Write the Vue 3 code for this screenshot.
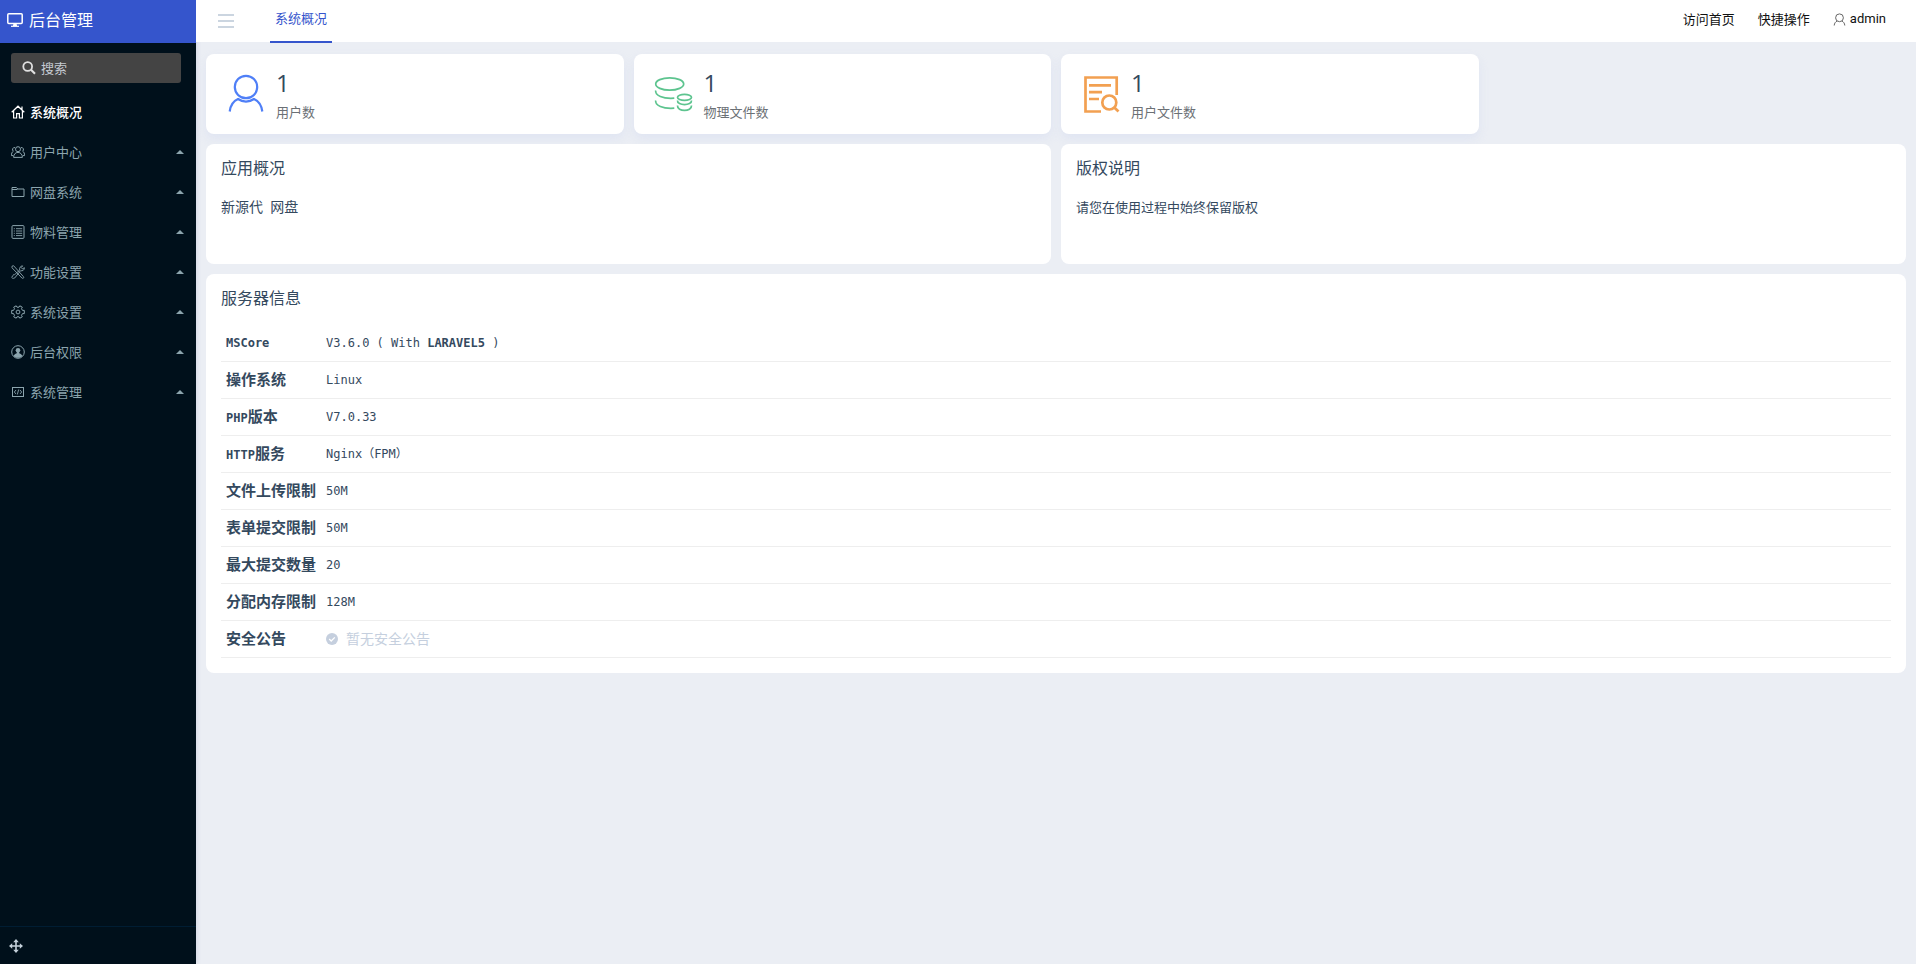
<script setup>
const menu = [
  { name: '系统概况', icon: 'home', active: true },
  { name: '用户中心', icon: 'users' },
  { name: '网盘系统', icon: 'folder' },
  { name: '物料管理', icon: 'list' },
  { name: '功能设置', icon: 'tools' },
  { name: '系统设置', icon: 'gear' },
  { name: '后台权限', icon: 'person' },
  { name: '系统管理', icon: 'code' },
]

const stats = [
  { label: '用户数', value: 1, icon: 'user' },
  { label: '物理文件数', value: 1, icon: 'coins' },
  { label: '用户文件数', value: 1, icon: 'search-doc' },
]

const server = [
  { latin: 'MSCore', cjk: '' },
  { latin: '', cjk: '操作系统', value: 'Linux' },
  { latin: 'PHP', cjk: '版本', value: 'V7.0.33' },
  { latin: 'HTTP', cjk: '服务', value: 'Nginx（FPM）' },
  { latin: '', cjk: '文件上传限制', value: '50M' },
  { latin: '', cjk: '表单提交限制', value: '50M' },
  { latin: '', cjk: '最大提交数量', value: '20' },
  { latin: '', cjk: '分配内存限制', value: '128M' },
  { latin: '', cjk: '安全公告', notice: '暂无安全公告' },
]
</script>

<template>
  <div class="shell">
    <aside class="sidebar">
      <a class="brand" href="#">
        <svg width="16" height="16" viewBox="0 0 16 16" fill="none" stroke="currentColor">
          <rect x="0.8" y="1.8" width="14.4" height="9.6" rx="1" stroke-width="1.5" />
          <path d="M6.5 11.5h3l.6 2.6H5.9z" fill="currentColor" stroke="none" />
          <path d="M4 14.3h8" stroke-width="1.2" />
        </svg>
        <span>后台管理</span>
      </a>
      <label class="search">
        <svg width="14" height="14" viewBox="0 0 14 14" fill="none" stroke="currentColor">
          <circle cx="5.7" cy="5.5" r="4.4" stroke-width="1.8" />
          <path d="M9 8.8l4 4" stroke-width="2.2" />
        </svg>
        <input type="text" placeholder="搜索" aria-label="搜索" />
      </label>
      <nav class="menu">
        <a v-for="m in menu" :key="m.name" href="#" class="item" :class="{ active: m.active }">
          <svg width="14" height="14" viewBox="0 0 14 14" fill="none" stroke="currentColor">
            <template v-if="m.icon === 'home'">
              <path d="M.7 7.3L7 1.2l6.3 6.1M2.6 6v7h3V8.6h2.8V13h3V6M11 1.500v3.200" stroke-width="1.200" />
            </template>
            <template v-else-if="m.icon === 'users'">
              <circle cx="7" cy="4.2" r="2.5" />
              <path d="M2.6 12.4c0-3 1.8-5 4.4-5s4.4 2 4.4 5zM4 2.6a2 2 0 0 0-1.6 3.6C1 6.8.4 8.6.4 10.6h1.8M10 2.6a2 2 0 0 1 1.6 3.6c1.4.6 2 2.4 2 4.4h-1.8" />
            </template>
            <template v-else-if="m.icon === 'folder'">
              <path d="M1 2.5h4.4L6.8 4H13v7.500H1zM1 4.500h5.500" />
            </template>
            <template v-else-if="m.icon === 'list'">
              <rect x="1" y=".6" width="12" height="12.8" rx="1" />
              <path d="M5 3.7h6.2M5 6h6.2M5 8.3h6.2M5 10.6h6.2M2.8 3.7h1M2.8 6h1M2.8 8.3h1M2.8 10.6h1" stroke-width=".9" />
            </template>
            <template v-else-if="m.icon === 'tools'">
              <path d="M1 1.2l1.6-.5 9.8 10.9c1 1.2-.4 2.4-1.5 1.4L1 2.8zM8.7 5.1c-.6-2 .8-4.4 3-4.2L10.2 2.5l1.2 1.4 2-1.2c.2 2.2-2 3.6-3.8 3L4.5 12c-.5 1.6-3.2 1.8-3.8.4l1.2-1.8c-.2-.7 1.2-1.4 1.8-1z" stroke-width=".9" />
            </template>
            <template v-else-if="m.icon === 'gear'">
              <circle cx="7" cy="7" r="1.9" />
              <path d="M5.200.8L6 2.200h2L8.800.8l2.500 1.400-.8 1.500 1 1.700h1.800v3.200h-1.800l-1 1.700.8 1.500-2.500 1.400L8 11.800H6l-.8 1.400-2.500-1.400.8-1.500-1-1.700H.7V5.400h1.800l1-1.700-.8-1.500z" stroke-linejoin="round" />
            </template>
            <template v-else-if="m.icon === 'person'">
              <circle cx="7" cy="7" r="6.3" />
              <circle cx="7" cy="5.200" r="2.300" fill="currentColor" stroke="none" />
              <path d="M2.600 10.800C3.500 8.800 5 8.600 5.800 8.200V7h2.400v1.200c.8.4 2.300.6 3.200 2.600C10 13.500 4 13.500 2.600 10.800z" fill="currentColor" stroke="none" />
            </template>
            <template v-else>
              <rect x="1.500" y="2.500" width="11" height="9" />
              <path d="M5 5L3.300 7 5 9M9 5l1.700 2L9 9M7.700 4.500l-1.400 5" stroke-width=".9" />
            </template>
          </svg>
          <span>{{ m.name }}</span>
          <i v-if="!m.active" class="caret"></i>
        </a>
      </nav>
      <div class="side-foot">
        <button type="button" aria-label="移动">
          <svg width="14" height="14" viewBox="0 0 14 14" fill="currentColor">
            <path d="M7 0l2.800 3.200H7.800v3h3V4.200L14 7l-3.200 2.800V7.800h-3v3h2L7 14l-2.800-3.200h2v-3h-3v2L0 7l3.200-2.800v2h3v-3h-2z" />
          </svg>
        </button>
      </div>
    </aside>

    <div class="content">
      <header class="topbar">
        <button type="button" class="burger" aria-label="菜单"><i></i><i></i><i></i></button>
        <a href="#" class="tab">系统概况</a>
        <nav class="links">
          <a href="#">访问首页</a>
          <a href="#">快捷操作</a>
          <a href="#" class="account">
            <svg width="13" height="13" viewBox="0 0 13 13" fill="none" stroke="currentColor">
              <circle cx="6.500" cy="4.800" r="3.900" />
              <path d="M1.200 12.500c.2-2.300 1.300-3.700 3-4.500M11.800 12.500c-.2-2.300-1.300-3.700-3-4.500" />
            </svg>
            <span>admin</span>
          </a>
        </nav>
      </header>

      <main class="main">
        <section class="stats">
          <article v-for="s in stats" :key="s.label" class="stat">
            <svg v-if="s.icon === 'user'" width="40" height="40" viewBox="0 0 40 40" fill="none" stroke="#4f7ff7" stroke-width="2.200">
              <circle cx="20" cy="13" r="11.200" />
              <path d="M3.700 37.500C4.500 31 7.500 27 12 25c5 3.300 11 3.300 16 0 4.500 2 7.500 6 8.300 12.500" />
            </svg>
            <svg v-else-if="s.icon === 'coins'" width="40" height="40" viewBox="0 0 40 40" fill="none" stroke="#5dc48f" stroke-width="1.700">
              <ellipse cx="15.700" cy="10" rx="14" ry="6.200" />
              <path d="M1.700 16.500c-.8 5 7 8.500 18.600 7.700M1.700 26.500c-.8 5 7 8.500 18.600 7.700" />
              <ellipse cx="30.500" cy="23.300" rx="7" ry="3" />
              <path d="M23.500 26.500c-.5 5.500 14.500 5.500 14 0M23.500 31.500c-.5 6.500 14.500 6.500 14 0" />
            </svg>
            <svg v-else width="40" height="40" viewBox="0 0 40 40" fill="none" stroke="#f2a051" stroke-width="2.700">
              <path d="M20 37.500H4.500V3.500h31.200V21M8 11.300h22M8 18.200h13M8 25h10" />
              <circle cx="28.300" cy="28.500" r="7" />
              <path d="M33.300 33.500l4.200 4" />
            </svg>
            <div class="figures">
              <strong>{{ s.value }}</strong>
              <span>{{ s.label }}</span>
            </div>
          </article>
        </section>

        <div class="pair">
          <section class="card">
            <h2>应用概况</h2>
            <p class="app-name">新源代&nbsp; 网盘</p>
          </section>
          <section class="card">
            <h2>版权说明</h2>
            <p>请您在使用过程中始终保留版权</p>
          </section>
        </div>

        <section class="card">
          <h2>服务器信息</h2>
          <table>
            <tbody>
              <tr v-for="r in server" :key="r.latin + r.cjk">
                <th scope="row">{{ r.latin }}<span v-if="r.cjk">{{ r.cjk }}</span></th>
                <td v-if="r.notice" class="notice">
                  <div>
                    <svg width="12" height="12" viewBox="0 0 12 12">
                      <circle cx="6" cy="6" r="6" fill="currentColor" />
                      <path d="M3.200 6l2 2 3.600-3.600" fill="none" stroke="#fff" stroke-width="1.300" />
                    </svg>
                    <span>{{ r.notice }}</span>
                  </div>
                </td>
                <td v-else-if="r.value">{{ r.value }}</td>
                <td v-else>V3.6.0 ( With <b>LARAVEL5</b> )</td>
              </tr>
            </tbody>
          </table>
        </section>
      </main>
    </div>
  </div>
</template>

<style>
html,
body {
  background: #ebeef4;
}
</style>

<style scoped>
.shell {
  display: flex;
  min-height: 100vh;
  font: 13px/20px "Open Sans", "Noto Sans CJK SC", sans-serif;
  color: #34495e;
}
.shell * {
  box-sizing: border-box;
}
a {
  color: inherit;
  text-decoration: none;
}
button {
  border: 0;
  padding: 0;
  background: none;
  color: inherit;
}
svg {
  flex: none;
  display: block;
}
.sidebar {
  flex: 0 0 196px;
  min-width: 0;
  display: flex;
  flex-direction: column;
  background: #00101b;
  color: #8ca5ae;
  box-shadow: 0 0 5px rgba(60, 80, 130, 0.2);
}
.brand {
  display: flex;
  align-items: center;
  gap: 6px;
  height: 43px;
  padding: 0 7px 3px;
  background: #3555cc;
  color: #fff;
  font-size: 16px;
}
.search {
  display: flex;
  align-items: center;
  gap: 5px;
  height: 30px;
  margin: 10px 15px 9px 11px;
  padding: 0 11px;
  border-radius: 3px;
  background: #444;
  color: #e0e0e0;
}
.search input {
  flex: 1;
  min-width: 0;
  border: 0;
  padding: 0;
  outline: 0;
  background: none;
  font: inherit;
  color: inherit;
}
.search input::placeholder {
  color: #c4cad2;
  opacity: 1;
}
.item {
  display: flex;
  align-items: center;
  gap: 5px;
  height: 40px;
  padding: 0 12px 0 11px;
}
.item.active {
  color: #fff;
  font-weight: 500;
}
.caret {
  margin-left: auto;
  border: 4px solid transparent;
  border-top: 0;
  border-bottom-color: #8ca5ae;
}
.side-foot {
  display: flex;
  align-items: center;
  height: 38px;
  margin-top: auto;
  padding: 0 9px;
  border-top: 1px solid #001d33;
  color: #c3d0da;
}
.content {
  flex: 1;
  min-width: 0;
}
.topbar {
  display: flex;
  height: 42px;
  padding: 0 30px 0 22px;
  background: #fff;
}
.burger {
  display: flex;
  flex-direction: column;
  justify-content: center;
  gap: 4px;
  width: 16px;
  margin-right: 36px;
}
.burger i {
  height: 2px;
  background: #cbd5e0;
}
.tab {
  height: 43px;
  padding: 8px 5px 0;
  border-bottom: 2px solid #3555cc;
  color: #3555cc;
}
.links {
  display: flex;
  align-items: center;
  gap: 23px;
  margin-left: auto;
  padding-bottom: 4px;
  color: #111;
}
.account {
  display: flex;
  align-items: center;
  gap: 4px;
  font-family: Roboto, sans-serif;
}
.account svg {
  color: #666;
}
.main {
  display: grid;
  gap: 10px;
  padding: 12px 10px;
}
.stats {
  display: grid;
  grid-template-columns: repeat(4, 1fr);
  gap: 10px;
}
.stat {
  display: flex;
  align-items: center;
  gap: 10px;
  height: 80px;
  padding: 0 20px;
  border-radius: 8px;
  background: #fff;
  box-shadow: 0 5px 10px rgba(200, 210, 240, 0.3);
}
.figures {
  padding-top: 3px;
}
.figures strong {
  display: block;
  font-size: 24px;
  line-height: 32px;
  font-weight: 400;
}
.figures span {
  display: block;
  line-height: 26px;
  color: #6b7075;
}
.pair {
  display: grid;
  grid-template-columns: 1fr 1fr;
  gap: 10px;
}
.card {
  padding: 12px 15px 15px;
  border-radius: 8px;
  background: #fff;
}
.pair .card {
  min-height: 120px;
}
h2 {
  margin: 0 0 15px;
  font-size: 16px;
  line-height: 24px;
  font-weight: 400;
}
p {
  margin: 0;
  line-height: 24px;
}
.app-name {
  font-size: 14px;
}
table {
  width: 100%;
  border-collapse: separate;
  border-spacing: 0;
  font: 12px/20px "DejaVu Sans Mono", "Noto Sans CJK SC", monospace;
}
th,
td {
  height: 37px;
  padding: 0 5px;
  border-bottom: 1px solid #eee;
  text-align: left;
}
th {
  width: 100px;
  white-space: nowrap;
  font-weight: 700;
}
th span {
  font-size: 15px;
}
.notice div {
  display: flex;
  align-items: center;
  gap: 8px;
  font-size: 14px;
  color: #c5cfde;
}
</style>
